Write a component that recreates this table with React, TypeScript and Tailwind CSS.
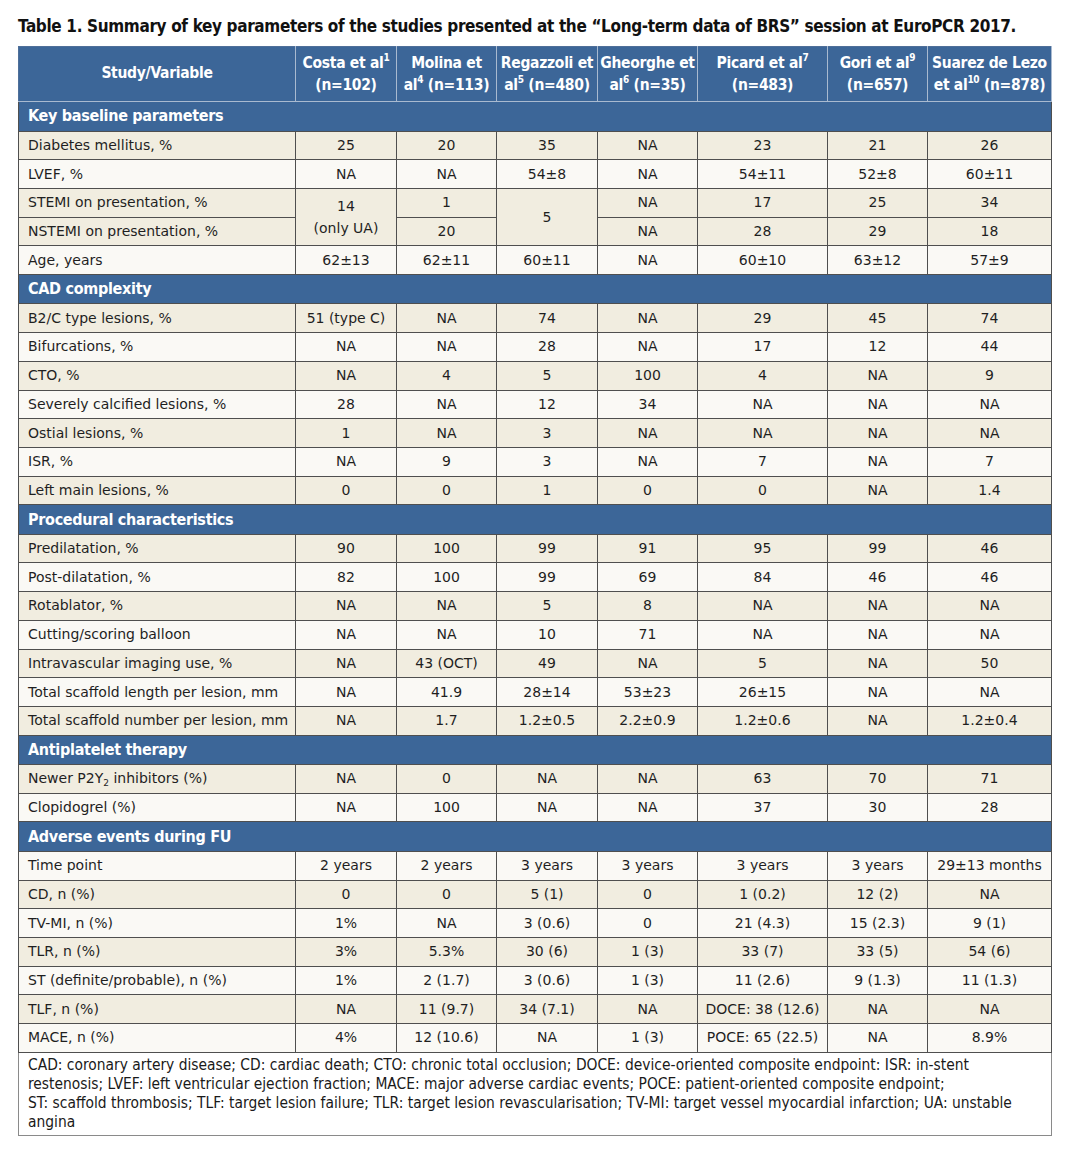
import React from 'react';

type Row = { label: React.ReactNode; cells: React.ReactNode[]; tone: 'b' | 'w' };

const BEIGE = 'bg-[#f1ede0]';
const WHITE = 'bg-[#faf9f5]';

const cond = { fontFamily: '"DejaVu Sans Condensed", "DejaVu Sans", sans-serif', fontStretch: 'condensed' } as const;

const sections: { title: string; rows: Row[] }[] = [
  {
    title: 'CAD complexity',
    rows: [
      { label: 'B2/C type lesions, %', cells: ['51 (type C)', 'NA', '74', 'NA', '29', '45', '74'], tone: 'b' },
      { label: 'Bifurcations, %', cells: ['NA', 'NA', '28', 'NA', '17', '12', '44'], tone: 'w' },
      { label: 'CTO, %', cells: ['NA', '4', '5', '100', '4', 'NA', '9'], tone: 'b' },
      { label: 'Severely calcified lesions, %', cells: ['28', 'NA', '12', '34', 'NA', 'NA', 'NA'], tone: 'w' },
      { label: 'Ostial lesions, %', cells: ['1', 'NA', '3', 'NA', 'NA', 'NA', 'NA'], tone: 'b' },
      { label: 'ISR, %', cells: ['NA', '9', '3', 'NA', '7', 'NA', '7'], tone: 'w' },
      { label: 'Left main lesions, %', cells: ['0', '0', '1', '0', '0', 'NA', '1.4'], tone: 'b' },
    ],
  },
  {
    title: 'Procedural characteristics',
    rows: [
      { label: 'Predilatation, %', cells: ['90', '100', '99', '91', '95', '99', '46'], tone: 'b' },
      { label: 'Post-dilatation, %', cells: ['82', '100', '99', '69', '84', '46', '46'], tone: 'w' },
      { label: 'Rotablator, %', cells: ['NA', 'NA', '5', '8', 'NA', 'NA', 'NA'], tone: 'b' },
      { label: 'Cutting/scoring balloon', cells: ['NA', 'NA', '10', '71', 'NA', 'NA', 'NA'], tone: 'w' },
      { label: 'Intravascular imaging use, %', cells: ['NA', '43 (OCT)', '49', 'NA', '5', 'NA', '50'], tone: 'b' },
      { label: 'Total scaffold length per lesion, mm', cells: ['NA', '41.9', '28±14', '53±23', '26±15', 'NA', 'NA'], tone: 'w' },
      { label: 'Total scaffold number per lesion, mm', cells: ['NA', '1.7', '1.2±0.5', '2.2±0.9', '1.2±0.6', 'NA', '1.2±0.4'], tone: 'b' },
    ],
  },
  {
    title: 'Antiplatelet therapy',
    rows: [
      {
        label: (
          <>
            Newer P2Y<sub className="text-[9px]">2</sub> inhibitors (%)
          </>
        ),
        cells: ['NA', '0', 'NA', 'NA', '63', '70', '71'],
        tone: 'b',
      },
      { label: 'Clopidogrel (%)', cells: ['NA', '100', 'NA', 'NA', '37', '30', '28'], tone: 'w' },
    ],
  },
  {
    title: 'Adverse events during FU',
    rows: [
      { label: 'Time point', cells: ['2 years', '2 years', '3 years', '3 years', '3 years', '3 years', '29±13 months'], tone: 'w' },
      { label: 'CD, n (%)', cells: ['0', '0', '5 (1)', '0', '1 (0.2)', '12 (2)', 'NA'], tone: 'b' },
      { label: 'TV-MI, n (%)', cells: ['1%', 'NA', '3 (0.6)', '0', '21 (4.3)', '15 (2.3)', '9 (1)'], tone: 'w' },
      { label: 'TLR, n (%)', cells: ['3%', '5.3%', '30 (6)', '1 (3)', '33 (7)', '33 (5)', '54 (6)'], tone: 'b' },
      { label: 'ST (definite/probable), n (%)', cells: ['1%', '2 (1.7)', '3 (0.6)', '1 (3)', '11 (2.6)', '9 (1.3)', '11 (1.3)'], tone: 'w' },
      { label: 'TLF, n (%)', cells: ['NA', '11 (9.7)', '34 (7.1)', 'NA', 'DOCE: 38 (12.6)', 'NA', 'NA'], tone: 'b' },
      { label: 'MACE, n (%)', cells: ['4%', '12 (10.6)', 'NA', '1 (3)', 'POCE: 65 (22.5)', 'NA', '8.9%'], tone: 'w' },
    ],
  },
];

const headers: React.ReactNode[] = [
  <>Costa et al<sup>1</sup><br />(n=102)</>,
  <>Molina et<br />al<sup>4</sup> (n=113)</>,
  <>Regazzoli et<br />al<sup>5</sup> (n=480)</>,
  <>Gheorghe et<br />al<sup>6</sup> (n=35)</>,
  <>Picard et al<sup>7</sup><br />(n=483)</>,
  <>Gori et al<sup>9</sup><br />(n=657)</>,
  <>Suarez de Lezo<br />et al<sup>10</sup> (n=878)</>,
];

const td = 'border border-[#4f4f4f] text-center align-middle px-0.5 whitespace-nowrap';
const tdLabel = 'border border-[#4f4f4f] text-left align-middle pl-[9px] whitespace-nowrap';

function SectionRow({ title }: { title: string }) {
  return (
    <tr className="h-[29.5px] bg-[#3c6698]">
      <td
        colSpan={8}
        className="border border-[#4f4f4f] pl-[9px] text-[16px] tracking-[-0.3px] font-bold text-white align-middle"
        style={cond}
      >
        {title}
      </td>
    </tr>
  );
}

function DataRow({ row }: { row: Row }) {
  return (
    <tr className={`h-[28.7px] ${row.tone === 'b' ? BEIGE : WHITE}`}>
      <td className={tdLabel}>{row.label}</td>
      {row.cells.map((c, i) => (
        <td key={i} className={td}>
          {c}
        </td>
      ))}
    </tr>
  );
}

export default function App() {
  return (
    <div className="w-[1083px] h-[1155px] bg-white pt-[15px] pl-[18px] text-[#1f1f1f]">
      <h1
        className="text-[17px] tracking-[-0.35px] font-bold leading-[22px] text-[#111] mb-[9px] whitespace-nowrap"
        style={cond}
      >
        Table 1. Summary of key parameters of the studies presented at the “Long-term data of BRS” session at EuroPCR 2017.
      </h1>
      <table
        className="table-fixed border-collapse w-[1033px] text-[14px]"
        style={{ fontFamily: '"DejaVu Sans", sans-serif' }}
      >
        <colgroup>
          <col className="w-[277px]" />
          <col className="w-[101px]" />
          <col className="w-[100px]" />
          <col className="w-[101px]" />
          <col className="w-[100px]" />
          <col className="w-[130px]" />
          <col className="w-[100px]" />
          <col className="w-[124px]" />
        </colgroup>
        <thead>
          <tr className="h-[55px] bg-[#3c6698] text-white">
            <th
              className="border border-[#4f6f99] border-r-[#a9bad0] border-b-[#a9bad0] text-[15.5px] tracking-[-0.3px] font-bold align-middle"
              style={cond}
            >
              Study/Variable
            </th>
            {headers.map((h, i) => (
              <th
                key={i}
                className="border border-[#4f6f99] border-x-[#a9bad0] border-b-[#a9bad0] text-[15.5px] tracking-[-0.3px] leading-[22px] font-bold align-middle whitespace-nowrap [&_sup]:text-[10px] [&_sup]:-top-[0.7em]"
                style={cond}
              >
                {h}
              </th>
            ))}
          </tr>
        </thead>
        <tbody>
          <SectionRow title="Key baseline parameters" />
          <DataRow row={{ label: 'Diabetes mellitus, %', cells: ['25', '20', '35', 'NA', '23', '21', '26'], tone: 'b' }} />
          <DataRow row={{ label: 'LVEF, %', cells: ['NA', 'NA', '54±8', 'NA', '54±11', '52±8', '60±11'], tone: 'w' }} />
          <tr className={`h-[28.7px] ${BEIGE}`}>
            <td className={tdLabel}>STEMI on presentation, %</td>
            <td rowSpan={2} className={`${td} leading-[22px]`}>
              14
              <br />
              (only UA)
            </td>
            <td className={td}>1</td>
            <td rowSpan={2} className={td}>5</td>
            <td className={td}>NA</td>
            <td className={td}>17</td>
            <td className={td}>25</td>
            <td className={td}>34</td>
          </tr>
          <tr className={`h-[28.7px] ${BEIGE}`}>
            <td className={tdLabel}>NSTEMI on presentation, %</td>
            <td className={td}>20</td>
            <td className={td}>NA</td>
            <td className={td}>28</td>
            <td className={td}>29</td>
            <td className={td}>18</td>
          </tr>
          <DataRow row={{ label: 'Age, years', cells: ['62±13', '62±11', '60±11', 'NA', '60±10', '63±12', '57±9'], tone: 'w' }} />
          {sections.map((s) => (
            <React.Fragment key={s.title}>
              <SectionRow title={s.title} />
              {s.rows.map((r, i) => (
                <DataRow key={i} row={r} />
              ))}
            </React.Fragment>
          ))}
          <tr>
            <td
              colSpan={8}
              className="border border-[#8a8a8a] bg-white pl-[9px] pr-2 pt-[3px] pb-[3px] text-[15.4px] leading-[19px] text-[#1a1a1a] align-top whitespace-nowrap"
              style={cond}
            >
              CAD: coronary artery disease; CD: cardiac death; CTO: chronic total occlusion; DOCE: device-oriented composite endpoint: ISR: in-stent
              <br />
              restenosis; LVEF: left ventricular ejection fraction; MACE: major adverse cardiac events; POCE: patient-oriented composite endpoint;
              <br />
              ST: scaffold thrombosis; TLF: target lesion failure; TLR: target lesion revascularisation; TV-MI: target vessel myocardial infarction; UA: unstable
              <br />
              angina
            </td>
          </tr>
        </tbody>
      </table>
    </div>
  );
}
